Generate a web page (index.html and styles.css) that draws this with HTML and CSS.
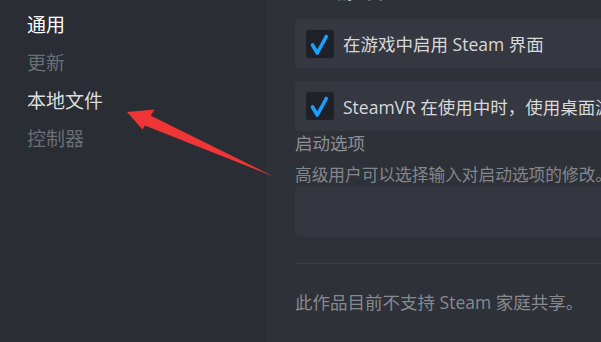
FILE: index.html
```html
<!DOCTYPE html>
<html lang="zh-CN">
<head>
<meta charset="utf-8">
<link rel="stylesheet" href="styles.css">
</head>
<body>
<div class="app">
  <nav class="sidebar">
    <div class="nav-item active">通用</div>
    <div class="nav-item dim">更新</div>
    <div class="nav-item">本地文件</div>
    <div class="nav-item dim">控制器</div>
  </nav>
  <main class="panel">
    <div class="heading"><span class="heading-text">游戏中</span></div>
    <div class="row">
      <span class="checkbox"><svg viewBox="0 0 28 28" width="28" height="28"><path d="M6.5 15 L11.3 23 L20.3 6.5" fill="none" stroke="#1a9fff" stroke-width="3.6" stroke-linecap="round" stroke-linejoin="round"/></svg></span>
      <span class="row-text">在游戏中启用 Steam 界面</span>
    </div>
    <div class="row row2">
      <span class="checkbox"><svg viewBox="0 0 28 28" width="28" height="28"><path d="M6.5 15 L11.3 23 L20.3 6.5" fill="none" stroke="#1a9fff" stroke-width="3.6" stroke-linecap="round" stroke-linejoin="round"/></svg></span>
      <span class="row-text">SteamVR 在使用中时，使用桌面游戏剧院</span>
    </div>
    <div class="label">启动选项</div>
    <div class="desc">高级用户可以选择输入对启动选项的修改。</div>
    <div class="input"></div>
    <div class="separator"></div>
    <div class="footer">此作品目前不支持 Steam 家庭共享。</div>
  </main>
</div>
<svg class="arrow" width="601" height="342" viewBox="0 0 601 342">
  <polygon points="127,112 154.5,109.5 142.5,129.5" fill="#ef3535"/>
  <polygon points="148.5,114.5 143.5,125 273.5,176.5" fill="#ef3535"/>
</svg>
</body>
</html>
```
FILE: styles.css
```css
html, body {
  margin: 0;
  padding: 0;
}
body {
  width: 601px;
  height: 342px;
  overflow: hidden;
  background: #2a2d34;
  font-family: "Open Sans", "Noto Sans CJK SC", sans-serif;
  position: relative;
}
.app {
  display: flex;
  width: 601px;
  height: 342px;
  overflow: hidden;
}
.sidebar {
  width: 266px;
  flex: none;
  background: #2a2d34;
  padding: 5px 0 0 27px;
  box-sizing: border-box;
}
.nav-item {
  font-size: 19px;
  line-height: 38px;
  height: 38px;
  color: #dcdedf;
  font-family: "Noto Sans CJK SC", sans-serif;
}
.nav-item.active {
  color: #ffffff;
}
.nav-item.dim {
  color: #696d74;
}
.panel {
  flex: 1;
  background: #2e3138;
  padding-left: 29px;
  min-width: 0;
  overflow: hidden;
}
.heading {
  height: 19px;
  overflow: hidden;
  padding-left: 42px;
}
.heading-text {
  display: block;
  margin-top: -17.5px;
  line-height: 18px;
  font-size: 17.5px;
  color: #b8bcbf;
  font-family: "Noto Sans CJK SC", sans-serif;
}
.row {
  height: 49px;
  background: #353840;
  border-radius: 3px 0 0 3px;
  display: flex;
  align-items: center;
  padding-left: 11px;
  margin-bottom: 13px;
  white-space: nowrap;
  overflow: hidden;
}
.row2 {
  height: 50px;
  margin-bottom: 0;
}
.checkbox {
  width: 28px;
  height: 28px;
  flex: none;
  background: #1e2127;
  border-radius: 3px;
  display: block;
}
.checkbox svg {
  display: block;
}
.row-text {
  margin-left: 9px;
  font-size: 17.5px;
  color: #d6d8da;
}
.label {
  font-size: 17.5px;
  line-height: 24px;
  color: #8b8f95;
  font-family: "Noto Sans CJK SC", sans-serif;
}
.desc {
  margin-top: 7px;
  font-size: 16.7px;
  line-height: 24px;
  color: #83878d;
  white-space: nowrap;
  overflow: hidden;
  font-family: "Noto Sans CJK SC", sans-serif;
}
.input {
  height: 51px;
  background: #33363e;
  border-radius: 3px 0 0 3px;
}
.separator {
  margin-top: 26px;
  height: 1px;
  background: #3a3d45;
}
.footer {
  margin-top: 26px;
  font-size: 17.5px;
  line-height: 24px;
  color: #868a90;
  white-space: nowrap;
}
.arrow {
  position: absolute;
  left: 0;
  top: 0;
  pointer-events: none;
}
```
